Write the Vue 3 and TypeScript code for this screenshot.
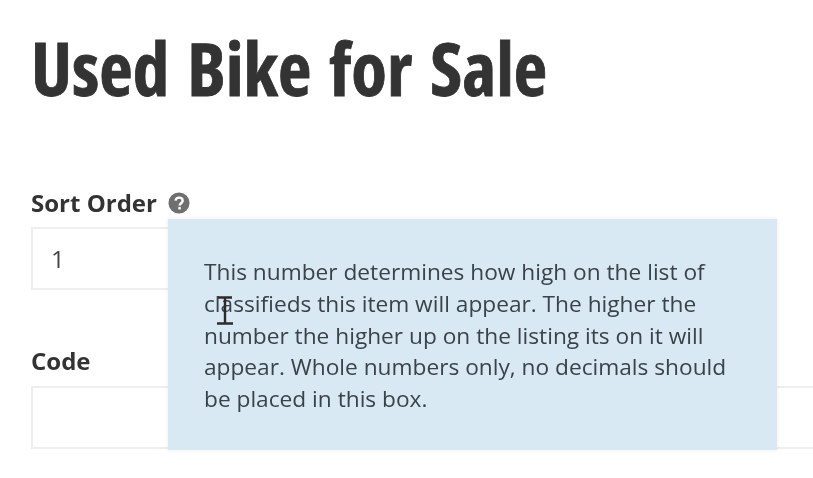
<script setup lang="ts">
const title: string = 'Used Bike for Sale'
const tip: string = 'This number determines how high on the list of classifieds this item will appear. The higher the number the higher up on the listing its on it will appear. Whole numbers only, no decimals should be placed in this box.'
</script>

<template>
  <main class="page">
    <h1 class="title">{{ title }}</h1>
    <div class="field first">
      <div class="label-row">
        <label class="label">Sort Order</label>
        <svg class="help" viewBox="0 0 24 24" aria-hidden="true">
          <circle cx="12" cy="12" r="11.500" fill="#6f6f6f" />
          <path d="M8.200 9.400a3.900 3.900 0 0 1 3.900-3.200c2.200 0 3.900 1.400 3.900 3.300 0 2.700-3.300 2.700-3.300 5.200" fill="none" stroke="#fff" stroke-width="2.600" />
          <rect x="11.200" y="16.200" width="2.800" height="2.800" fill="#fff" />
        </svg>
      </div>
      <div class="input short">1</div>
      <div class="tooltip">
        <p class="tip-text">{{ tip }}</p>
        <svg class="cursor" viewBox="0 0 16 29" aria-hidden="true">
          <path d="M1 1.500h14M8 1.500v26M0 27.500h16" fill="none" stroke="#2b2b2b" stroke-width="2.400" />
        </svg>
      </div>
    </div>
    <div class="field second">
      <label class="label">Code</label>
      <div class="input wide"></div>
    </div>
  </main>
</template>

<style scoped>
.page {
  width: 813px;
  height: 478px;
  overflow: hidden;
  box-sizing: border-box;
  padding: 25px 0 0 31px;
  background: #fff;
  color: #333;
  font-family: "Open Sans", "Noto Sans", sans-serif;
  filter: blur(0.4px);
}
.title {
  margin: 0;
  font-size: 73px;
  line-height: 86px;
  font-weight: 700;
  font-stretch: 75%;
  word-spacing: 5px;
  -webkit-text-stroke: 0.8px #333;
  color: #333;
  white-space: nowrap;
}
.field {
  position: relative;
}
.first {
  margin-top: 79px;
  z-index: 1;
}
.second {
  margin-top: 58px;
}
.label-row {
  display: flex;
  align-items: center;
  gap: 11px;
  height: 26px;
}
.label {
  display: block;
  font-size: 24px;
  line-height: 26px;
  font-weight: 700;
  color: #333;
}
.help {
  width: 22px;
  height: 22px;
}
.input {
  box-sizing: border-box;
  height: 63px;
  padding: 0 18px;
  border: 2px solid #eeeeee;
  font-size: 24px;
  line-height: 59px;
  color: #444;
}
.short {
  width: 300px;
  margin-top: 11px;
}
.wide {
  margin-top: 12px;
  width: 800px;
}
.tooltip {
  position: absolute;
  left: 137px;
  top: 29px;
  box-sizing: border-box;
  width: 609px;
  height: 231px;
  padding: 37px 36px 0;
  background: #d8e9f4;
  box-shadow: 0 0 4px rgba(120, 120, 120, 0.15);
}
.tip-text {
  margin: 0;
  font-size: 22.700px;
  line-height: 31.750px;
  color: #3b434a;
}
.cursor {
  position: absolute;
  left: 49px;
  top: 77px;
  width: 16px;
  height: 29px;
}
</style>
